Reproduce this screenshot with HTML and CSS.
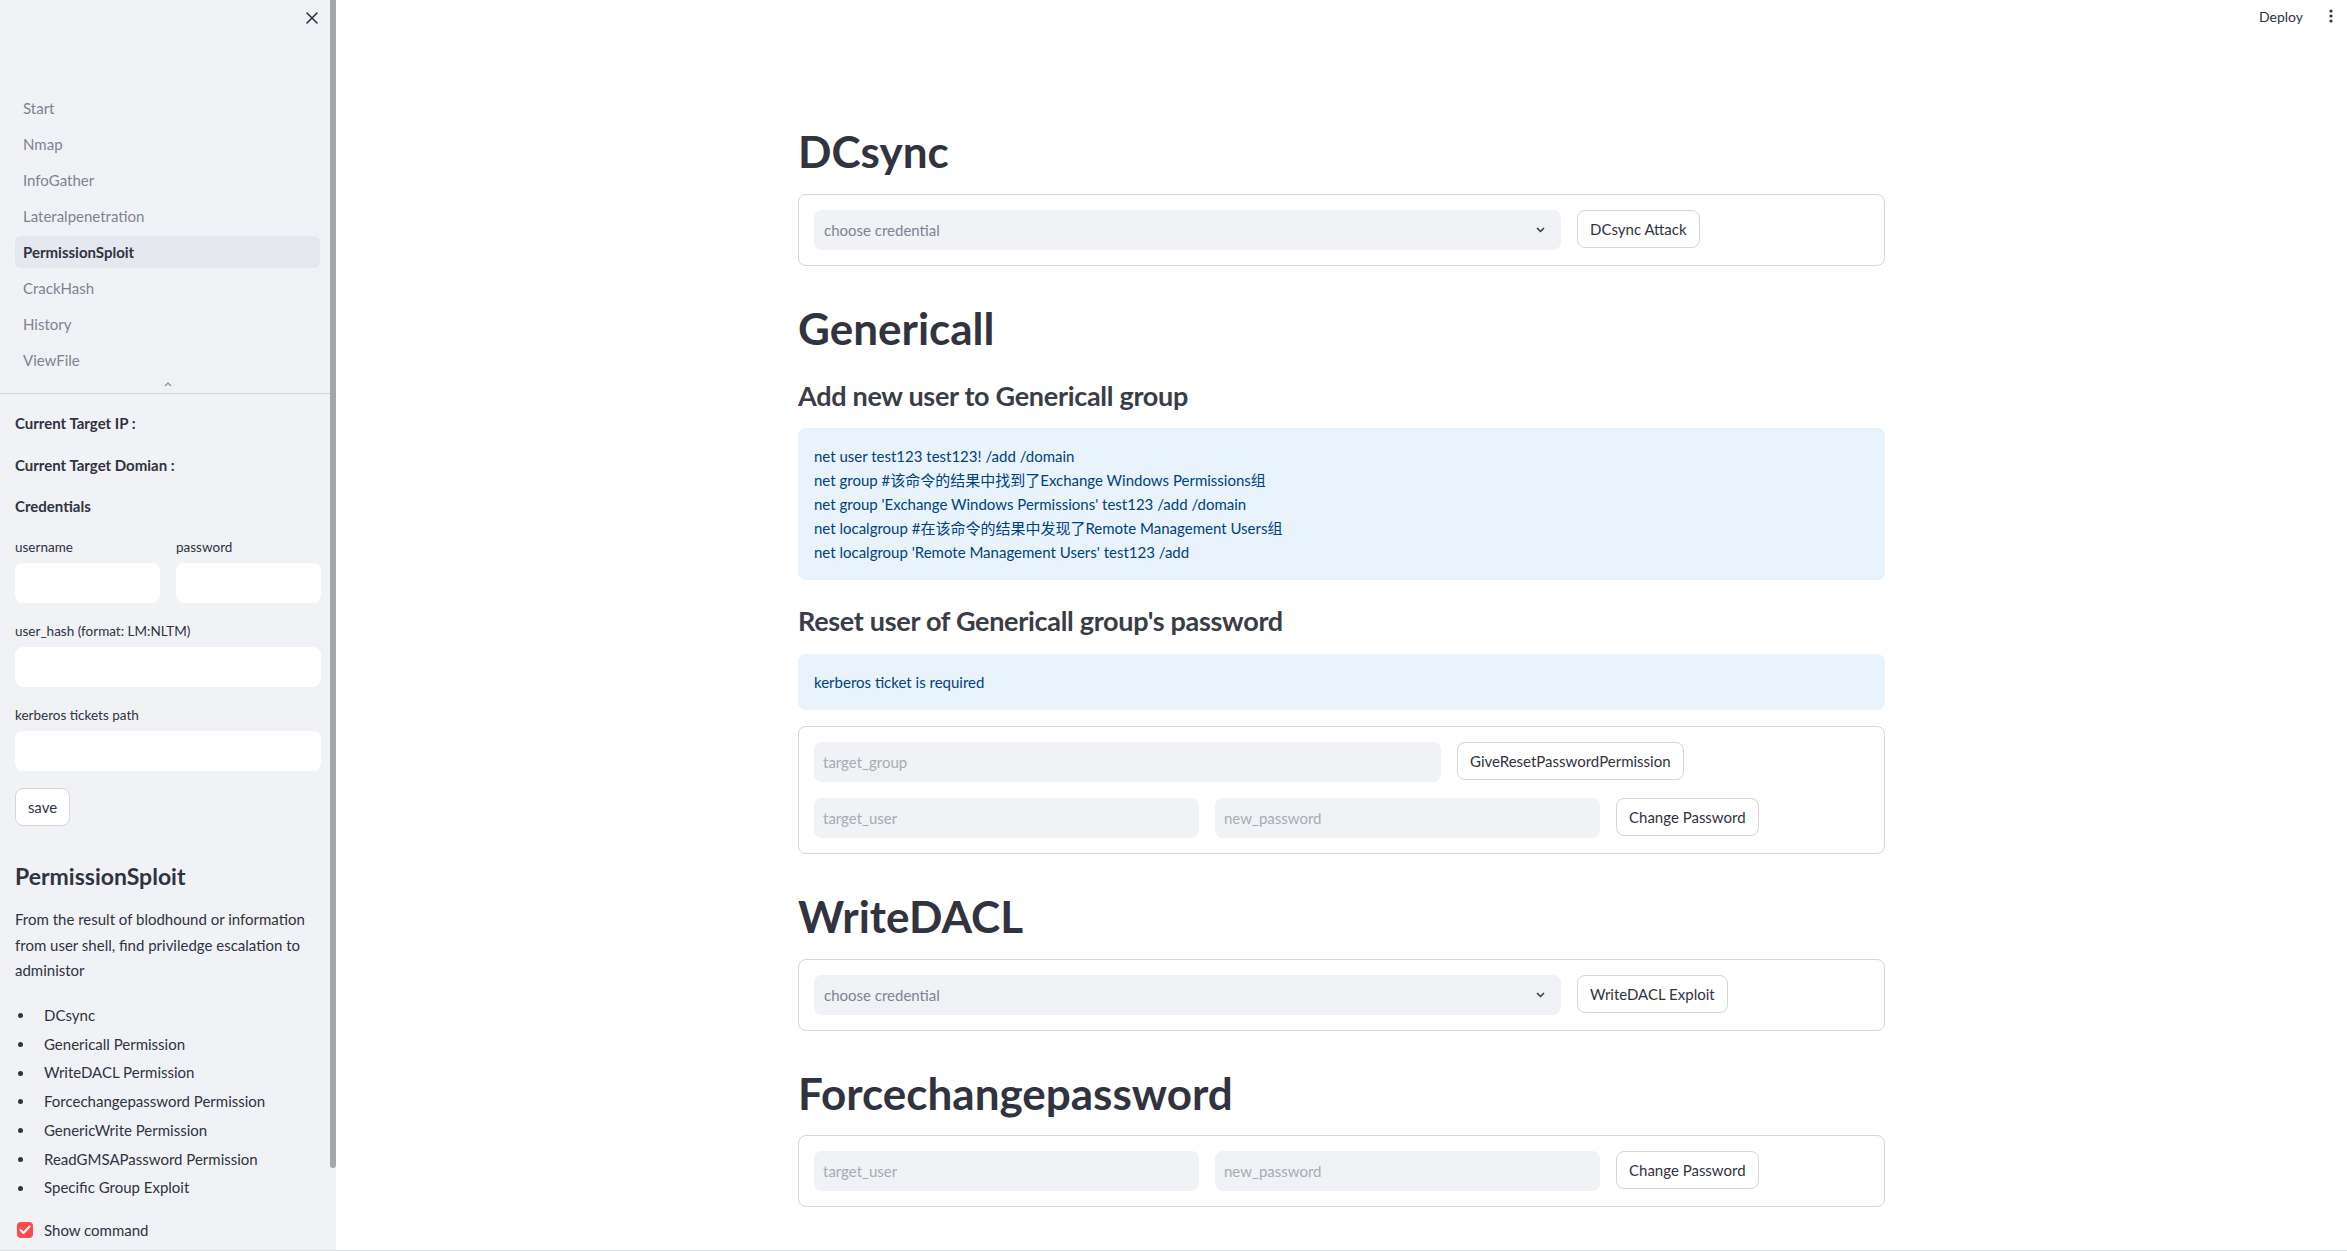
FILE: index.html
```html
<!DOCTYPE html>
<html lang="en">
<head>
<meta charset="utf-8">
<title>PermissionSploit</title>
<link rel="stylesheet" href="styles.css">
</head>
<body>
<div class="app">
  <aside class="sidebar">
    <div class="scroll-thumb"></div>
    <div class="sb-top">
      <svg class="close" width="12" height="12" viewBox="0 0 12 12"><path d="M1 1L11 11M11 1L1 11" stroke="#31333f" stroke-width="1.6" fill="none" stroke-linecap="round"/></svg>
    </div>
    <nav class="nav">
      <div class="nav-item">Start</div>
      <div class="nav-item">Nmap</div>
      <div class="nav-item">InfoGather</div>
      <div class="nav-item">Lateralpenetration</div>
      <div class="nav-item active">PermissionSploit</div>
      <div class="nav-item">CrackHash</div>
      <div class="nav-item">History</div>
      <div class="nav-item">ViewFile</div>
    </nav>
    <div class="nav-more">
      <svg width="8" height="5" viewBox="0 0 8 5"><path d="M1 4L4 1L7 4" stroke="#8a8c94" stroke-width="1.2" fill="none"/></svg>
    </div>
    <div class="divider"></div>
    <div class="sb-content">
      <div class="sb-bold first">Current Target IP :</div>
      <div class="sb-bold second">Current Target Domian :</div>
      <div class="sb-bold third">Credentials</div>
      <div class="creds">
        <div class="field">
          <label class="lbl">username</label>
          <input class="sb-input" type="text">
        </div>
        <div class="field">
          <label class="lbl">password</label>
          <input class="sb-input" type="password">
        </div>
      </div>
      <div class="field spaced">
        <label class="lbl">user_hash (format: LM:NLTM)</label>
        <input class="sb-input" type="text">
      </div>
      <div class="field spaced">
        <label class="lbl">kerberos tickets path</label>
        <input class="sb-input" type="text">
      </div>
      <button class="btn save">save</button>
      <div class="sb-h">PermissionSploit</div>
      <p class="sb-p">From the result of blodhound or information from user shell, find priviledge escalation to administor</p>
      <ul class="sb-list">
        <li>DCsync</li>
        <li>Genericall Permission</li>
        <li>WriteDACL Permission</li>
        <li>Forcechangepassword Permission</li>
        <li>GenericWrite Permission</li>
        <li>ReadGMSAPassword Permission</li>
        <li>Specific Group Exploit</li>
      </ul>
      <div class="check-row">
        <span class="checkbox"><svg width="12" height="10" viewBox="0 0 12 10"><path d="M1.5 5L4.5 8L10.5 1.5" stroke="#fff" stroke-width="2" fill="none" stroke-linecap="round" stroke-linejoin="round"/></svg></span>
        <span>Show command</span>
      </div>
    </div>
  </aside>

  <main class="main">
    <header class="header">
      <span class="deploy">Deploy</span>
      <svg class="dots" width="4" height="14" viewBox="0 0 4 14"><circle cx="2" cy="2" r="1.6" fill="#31333f"/><circle cx="2" cy="7" r="1.6" fill="#31333f"/><circle cx="2" cy="12" r="1.6" fill="#31333f"/></svg>
    </header>
    <div class="content">
      <h1 class="h1">DCsync</h1>
      <div class="box">
        <div class="row sel">
          <div class="select"><span>choose credential</span><svg width="9" height="6" viewBox="0 0 9 6"><path d="M1 1L4.5 4.5L8 1" stroke="#31333f" stroke-width="1.5" fill="none"/></svg></div>
          <button class="btn">DCsync Attack</button>
        </div>
      </div>

      <h1 class="h1">Genericall</h1>
      <h3 class="h3">Add new user to Genericall group</h3>
      <div class="info">
        <div>net user test123 test123! /add /domain</div>
        <div>net group #该命令的结果中找到了Exchange Windows Permissions组</div>
        <div>net group 'Exchange Windows Permissions' test123 /add /domain</div>
        <div>net localgroup #在该命令的结果中发现了Remote Management Users组</div>
        <div>net localgroup 'Remote Management Users' test123 /add</div>
      </div>
      <h3 class="h3">Reset user of Genericall group's password</h3>
      <div class="info">
        <div>kerberos ticket is required</div>
      </div>
      <div class="box">
        <div class="row r1">
          <input class="in" type="text" placeholder="target_group">
          <button class="btn">GiveResetPasswordPermission</button>
        </div>
        <div class="row r3">
          <input class="in" type="text" placeholder="target_user">
          <input class="in" type="text" placeholder="new_password">
          <button class="btn">Change Password</button>
        </div>
      </div>

      <h1 class="h1">WriteDACL</h1>
      <div class="box">
        <div class="row sel">
          <div class="select"><span>choose credential</span><svg width="9" height="6" viewBox="0 0 9 6"><path d="M1 1L4.5 4.5L8 1" stroke="#31333f" stroke-width="1.5" fill="none"/></svg></div>
          <button class="btn">WriteDACL Exploit</button>
        </div>
      </div>

      <h1 class="h1">Forcechangepassword</h1>
      <div class="box">
        <div class="row r3">
          <input class="in" type="text" placeholder="target_user">
          <input class="in" type="text" placeholder="new_password">
          <button class="btn">Change Password</button>
        </div>
      </div>
    </div>
  </main>
</div>
</body>
</html>
```
FILE: styles.css
```css
* { box-sizing: border-box; }
html, body { margin: 0; padding: 0; }
body {
  font-family: Lato, "Noto Sans CJK SC", sans-serif;
  color: #31333f;
  background: #fff;
}
.app {
  display: flex;
  height: 1251px;
  overflow: hidden;
  border-bottom: 1px solid #dcdde0;
}

/* Sidebar */
.sidebar {
  width: 336px;
  flex-shrink: 0;
  background: #f0f2f6;
  position: relative;
}
.scroll-thumb {
  position: absolute;
  right: 0;
  top: 0;
  width: 6px;
  height: 1168px;
  background: #a4a6ab;
  border-radius: 0 0 3px 3px;
}
.sb-top {
  height: 36px;
  display: flex;
  justify-content: flex-end;
  align-items: center;
  padding-right: 18px;
}
.nav {
  padding: 56px 16px 0 15px;
  display: flex;
  flex-direction: column;
  gap: 4px;
}
.nav-item {
  height: 32px;
  line-height: 32px;
  padding-left: 8px;
  border-radius: 6px;
  font-size: 15px;
  color: #808390;
}
.nav-item.active {
  background: #e5e8ee;
  color: #31333f;
  font-weight: 700;
}
.nav-more {
  height: 17px;
  display: flex;
  justify-content: center;
  align-items: center;
}
.divider {
  height: 1px;
  background: #d3d5da;
}
.sb-content {
  padding: 17px 15px 0 15px;
}
.sb-bold {
  font-size: 15px;
  font-weight: 700;
  line-height: 24px;
}
.sb-bold.second { margin-top: 18px; }
.sb-bold.third { margin-top: 17px; }
.creds {
  display: grid;
  grid-template-columns: 1fr 1fr;
  gap: 16px;
  margin-top: 19px;
}
.field { display: flex; flex-direction: column; }
.field.spaced { margin-top: 18px; }
.lbl {
  font-size: 13.5px;
  line-height: 20px;
  margin-bottom: 6px;
}
.sb-input {
  height: 40px;
  border: none;
  border-radius: 8px;
  background: #fff;
  outline: none;
  width: 100%;
}
.btn {
  height: 38px;
  padding: 0 12px;
  border: 1px solid #d6d6d9;
  border-radius: 8px;
  background: #fff;
  font-family: inherit;
  font-size: 15px;
  color: #31333f;
  justify-self: start;
}
.btn.save {
  margin-top: 17px;
  width: 55px;
  padding: 0;
}
.sb-h {
  font-size: 23px;
  font-weight: 700;
  line-height: 32px;
  margin-top: 34px;
}
.sb-p {
  font-size: 15px;
  line-height: 25.6px;
  margin: 15px 0 0 0;
}
.sb-list {
  list-style: none;
  margin: 19px 0 0 0;
  padding: 0;
  font-size: 15px;
}
.sb-list li {
  display: flex;
  align-items: center;
  line-height: 25.6px;
  margin-bottom: 3.2px;
}
.sb-list li::before {
  content: "";
  width: 5px;
  height: 5px;
  border-radius: 50%;
  background: #31333f;
  margin-left: 3px;
  margin-right: 21px;
  flex-shrink: 0;
}
.check-row {
  display: flex;
  align-items: center;
  gap: 11px;
  margin-top: 17px;
  line-height: 24px;
  font-size: 15px;
}
.checkbox {
  width: 16px;
  height: 16px;
  margin-left: 2px;
  border-radius: 4px;
  background: #ff4b4b;
  display: flex;
  align-items: center;
  justify-content: center;
}

/* Main */
.main {
  flex: 1;
  display: flex;
  flex-direction: column;
}
.header {
  height: 32px;
  display: flex;
  justify-content: flex-end;
  align-items: center;
  gap: 26px;
  padding-right: 14px;
}
.deploy {
  font-size: 14px;
  color: #31333f;
}
.content {
  width: 1087px;
  margin: 0 auto;
  padding-top: 73px;
  display: flex;
  flex-direction: column;
  gap: 16px;
}
.h1 {
  font-size: 44px;
  font-weight: 700;
  line-height: 52.8px;
  padding-top: 20px;
  margin: 0;
}
.h3 {
  font-size: 27px;
  font-weight: 700;
  letter-spacing: -0.3px;
  line-height: 33.6px;
  padding-top: 8px;
  margin: 0;
  color: #3a3c47;
}
.box {
  border: 1px solid #d6d6d9;
  border-radius: 8px;
  padding: 15px;
  display: flex;
  flex-direction: column;
  gap: 16px;
}
.row {
  display: grid;
  gap: 16px;
  align-items: start;
}
.row.sel { grid-template-columns: 747px 1fr; }
.row.r1 { grid-template-columns: 627px 1fr; }
.row.r3 { grid-template-columns: 385px 385px 1fr; }
.select {
  height: 40px;
  background: #f0f2f6;
  border-radius: 8px;
  display: flex;
  align-items: center;
  justify-content: space-between;
  padding: 0 16px 0 10px;
  color: #808390;
  font-size: 15px;
}
.in {
  height: 40px;
  border: none;
  border-radius: 8px;
  background: #f0f2f6;
  padding: 0 9px;
  font-family: inherit;
  font-size: 15px;
  color: #31333f;
  outline: none;
}
.in::placeholder { color: #a9abb2; }
.info {
  background: #e8f3fc;
  border-radius: 8px;
  padding: 16px;
  color: #004280;
  font-size: 15px;
  line-height: 24px;
}
```
